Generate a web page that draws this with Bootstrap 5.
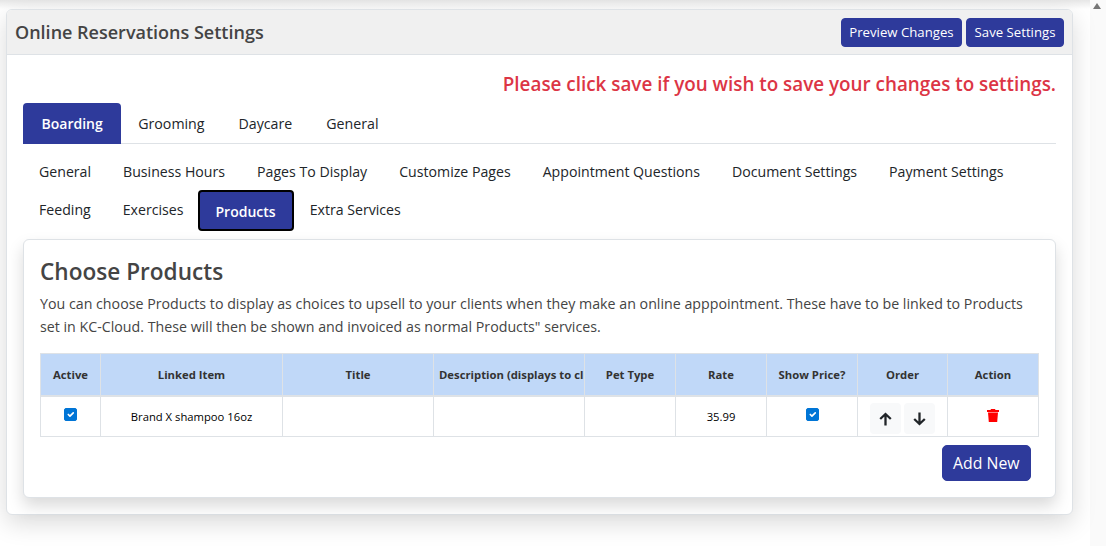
<!DOCTYPE html>
<html lang="en">
<head>
<meta charset="utf-8">
<title>Online Reservations Settings</title>
<link rel="stylesheet" href="https://cdn.jsdelivr.net/npm/bootstrap@5.3.0/dist/css/bootstrap.min.css">
<style>
html,body{height:100%;overflow:hidden}
body{font-family:"Open Sans","Noto Sans",sans-serif;font-size:14px;background:#fff;color:#212529}
.page-shell{height:546px;padding:9px 17px 0 6px;background:linear-gradient(#e6e6e6,#fff 9px)}
.scroll-strip{width:16px;background:#fafafa;flex:none;padding:3px 2px 0}
.scroll-strip svg{display:block}
.outer-card{width:1067px;height:506px;box-shadow:0 8px 24px rgba(0,0,0,.15);border-color:#dee2e6}
.outer-head{height:45px;background:#f0f0f0;padding:0 8px 0 8px;border-color:#dee2e6}
.outer-title{font-size:18px;font-weight:600;color:#444;margin:0;padding-top:2px}
.brand-btn{background:#2e3a9b;border-color:#2e3a9b;color:#fff;font-size:13.2px;padding:0 7.5px;height:29px;line-height:27px;border-radius:4px}
.notice{font-size:18.85px;font-weight:600;color:#dc3545;line-height:26px;padding-right:16px;margin-top:16px;text-align:right}
.outer-body{padding:0}
.main-tabs{margin:6px 16px 0 16px;border-bottom:1px solid #dee2e6;height:41px}
.main-tabs .nav-link{color:#212529;font-size:14.2px;padding:0 17px;line-height:41px;border:0;border-radius:4px 4px 0 0}
.main-tabs .nav-link.active,.sub-tabs .nav-link.active{background:#2e3a9b;color:#fff;font-weight:600;font-size:14px}
.main-tabs .nav-link.active{padding:0 18.5px}
.sub-tabs{margin:9px 16px 0 16px}
.sub-tabs .nav-link{color:#212529;font-size:14.15px;padding:0 16px;line-height:38px;height:38px;border-radius:4px}
.sub-tabs .nav-link.active{border:2px solid #000;line-height:39px;height:41px;padding:0 16px;margin:-1px 0 0 -2px}
.inner-card{margin:8px 16px 0 16px;height:259px;box-shadow:0 8px 16px rgba(0,0,0,.15);border-color:#dee2e6;padding:16px}
.inner-title{font-size:22.6px;font-weight:600;color:#444;margin:0 0 4px;line-height:32px}
.inner-text{font-size:14.23px;line-height:23px;color:#444;margin:0 0 15px}
.prod-table{table-layout:fixed;width:998px;margin:0;font-size:11.26px;border-color:#dee2e6}
.prod-table col{width:91px}
.prod-table col:nth-child(1){width:60px}
.prod-table col:nth-child(2){width:182px}
.prod-table col:nth-child(3),.prod-table col:nth-child(4){width:151px}
.prod-table col:nth-child(8){width:90px}
.prod-table th{background:#c0d8f8;font-weight:700;color:#333;height:42px;text-align:center;vertical-align:middle;padding:2px 5px 0;overflow:hidden;white-space:nowrap;border-bottom:2px solid #dee2e6;font-size:11.3px}
.prod-table td{height:41px;text-align:center;vertical-align:middle;padding:2px 0 0;color:#000}
.prod-table .form-check-input{width:13px;height:13px;margin:0;border-radius:2px;background-color:#0075d6;border-color:#0075d6;vertical-align:1px}
.order-group{margin-top:3px;gap:3px}
.order-btn{width:31px;height:31px;padding:0;background:#f8f9fa;border:0;border-radius:4px;display:inline-flex;align-items:center;justify-content:center}
.trash-icon{vertical-align:-1px}
.add-btn{background:#2e3a9b;border-color:#2e3a9b;color:#fff;font-size:15.8px;height:36px;padding:0 10.5px;line-height:34px;margin:8px 8px 0 0;border-radius:5px}
</style>
</head>
<body>
<div class="d-flex">
<div class="page-shell flex-grow-1">
<div class="card outer-card">
<div class="card-header outer-head d-flex justify-content-between align-items-center">
<h5 class="outer-title">Online Reservations Settings</h5>
<div class="d-flex gap-1"><button class="btn brand-btn">Preview Changes</button><button class="btn brand-btn">Save Settings</button></div>
</div>
<div class="card-body outer-body">
<div class="notice">Please click save if you wish to save your changes to settings.</div>
<ul class="nav nav-tabs main-tabs">
<li class="nav-item"><a class="nav-link active" href="#">Boarding</a></li>
<li class="nav-item"><a class="nav-link" href="#">Grooming</a></li>
<li class="nav-item"><a class="nav-link" href="#">Daycare</a></li>
<li class="nav-item"><a class="nav-link" href="#">General</a></li>
</ul>
<ul class="nav sub-tabs">
<li class="nav-item"><a class="nav-link" href="#">General</a></li>
<li class="nav-item"><a class="nav-link" href="#">Business Hours</a></li>
<li class="nav-item"><a class="nav-link" href="#">Pages To Display</a></li>
<li class="nav-item"><a class="nav-link" href="#">Customize Pages</a></li>
<li class="nav-item"><a class="nav-link" href="#">Appointment Questions</a></li>
<li class="nav-item"><a class="nav-link" href="#">Document Settings</a></li>
<li class="nav-item"><a class="nav-link" href="#">Payment Settings</a></li>
<li class="nav-item"><a class="nav-link" href="#">Feeding</a></li>
<li class="nav-item"><a class="nav-link" href="#">Exercises</a></li>
<li class="nav-item"><a class="nav-link active" href="#">Products</a></li>
<li class="nav-item"><a class="nav-link" href="#">Extra Services</a></li>
</ul>
<div class="card inner-card">
<h4 class="inner-title">Choose Products</h4>
<p class="inner-text">You can choose Products to display as choices to upsell to your clients when they make an online apppointment. These have to be linked to Products set in KC-Cloud. These will then be shown and invoiced as normal Products" services.</p>
<table class="table table-bordered prod-table">
<colgroup><col><col><col><col><col><col><col><col><col></colgroup>
<thead><tr><th>Active</th><th>Linked Item</th><th>Title</th><th>Description (displays to clients)</th><th>Pet Type</th><th>Rate</th><th>Show Price?</th><th>Order</th><th>Action</th></tr></thead>
<tbody><tr>
<td><input class="form-check-input" type="checkbox" checked aria-label="Active"></td>
<td>Brand X shampoo 16oz</td><td></td><td></td><td></td><td>35.99</td>
<td><input class="form-check-input" type="checkbox" checked aria-label="Show price"></td>
<td><div class="d-flex justify-content-center order-group">
<button class="order-btn" aria-label="Up"><svg width="13" height="14" viewBox="0 0 13 14" fill="none" stroke="#212529" stroke-width="2.3"><path d="M6.5 13.5V2M1.2 7l5.3-5 5.3 5"/></svg></button>
<button class="order-btn" aria-label="Down"><svg width="13" height="14" viewBox="0 0 13 14" fill="none" stroke="#212529" stroke-width="2.3"><path d="M6.5 .5V12M1.2 7l5.3 5 5.3-5"/></svg></button>
</div></td>
<td><svg class="trash-icon" width="12" height="13" viewBox="0 0 12 13" fill="#f00"><path d="M4 0h4l.5 1H12v2H0V1h3.5zM1 3.5h10L10.2 13H1.8z"/></svg></td>
</tr></tbody>
</table>
<div class="text-end"><button class="btn add-btn">Add New</button></div>
</div>
</div>
</div>
</div>
<div class="scroll-strip"><svg width="10" height="6" viewBox="0 0 10 6" fill="#777"><path d="M5 0l4 6H1z"/></svg></div>
</div>
<script src="https://cdn.jsdelivr.net/npm/bootstrap@5.3.0/dist/js/bootstrap.bundle.min.js"></script>
</body>
</html>
